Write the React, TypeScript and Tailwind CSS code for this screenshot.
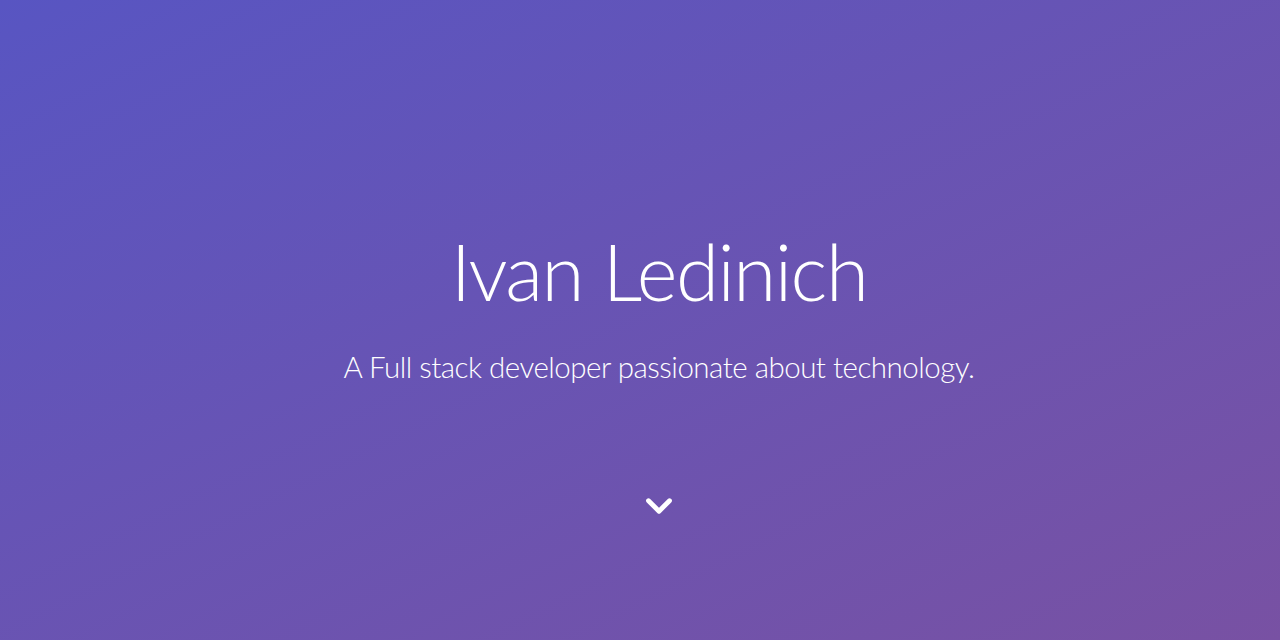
import { ChevronDown } from "lucide-react";

export default function App() {
  return (
    <section
      className="relative flex h-[640px] w-full flex-col items-center bg-gradient-to-br from-[#5855c2] to-[#7851a3] pl-[38px] text-white"
      style={{ fontFamily: "Lato, 'Open Sans', sans-serif" }}
    >
      {/* ヒーロー */}
      <h1 className="mt-[223px] text-[78px] font-light leading-[96px] tracking-[-1.5px]">Ivan Ledinich</h1>
      <p className="mt-[29px] text-[29.5px] font-light leading-[38px] tracking-[-0.5px]">
        A Full stack developer passionate about technology.
      </p>
      <div className="mt-[99px]">
        <ChevronDown size={42} strokeWidth={2.75} />
      </div>
    </section>
  );
}
